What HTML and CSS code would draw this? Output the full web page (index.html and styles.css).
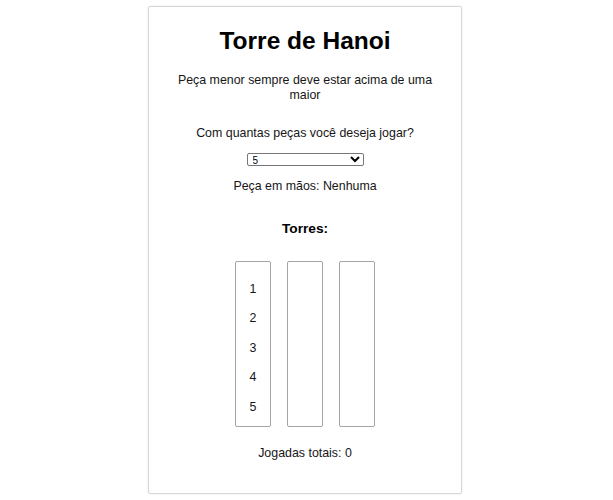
FILE: index.html
```html
<!DOCTYPE html>
<html lang="pt-BR">
<head>
<meta charset="utf-8">
<title>Torre de Hanoi</title>
<link rel="stylesheet" href="styles.css">
</head>
<body>
<main class="card">
  <h1 class="title">Torre de Hanoi</h1>
  <p class="subtitle">Peça menor sempre deve estar acima de uma maior</p>
  <p class="question">Com quantas peças você deseja jogar?</p>
  <select class="count">
    <option>3</option>
    <option>4</option>
    <option selected>5</option>
    <option>6</option>
    <option>7</option>
  </select>
  <p class="hand">Peça em mãos: Nenhuma</p>
  <h3 class="towers-title">Torres:</h3>
  <div class="towers">
    <div class="tower">
      <div class="piece">1</div>
      <div class="piece">2</div>
      <div class="piece">3</div>
      <div class="piece">4</div>
      <div class="piece">5</div>
    </div>
    <div class="tower"></div>
    <div class="tower"></div>
  </div>
  <p class="moves">Jogadas totais: 0</p>
</main>
</body>
</html>
```

FILE: styles.css
```css
html, body {
  margin: 0;
  padding: 0;
  background: #fff;
}

body {
  box-sizing: border-box;
  min-height: 100vh;
  padding-right: 3px;
  display: flex;
  align-items: center;
  justify-content: center;
  font-family: "Liberation Sans", Arial, sans-serif;
  font-size: 12.4px;
  color: #161616;
}

.card {
  box-sizing: border-box;
  width: 314px;
  height: 488px;
  padding: 20px 16px 0;
  border: 1px solid #d8d8d8;
  border-radius: 2px;
  box-shadow: 0 0 2px rgba(0, 0, 0, 0.12);
  text-align: center;
}

.title {
  margin: 0;
  font-size: 24.5px;
  line-height: 28px;
  font-weight: bold;
  color: #000;
}

.subtitle {
  margin: 18px 0 0;
  line-height: 14.5px;
}

.question {
  margin: 23.5px 0 0;
  line-height: 14.5px;
}

.count {
  display: block;
  margin: 13px auto 0;
  box-sizing: border-box;
  width: 117px;
  height: 13px;
  padding: 0 0 0 1px;
  font-family: "Liberation Sans", Arial, sans-serif;
  font-size: 10px;
  line-height: 11px;
  color: #000;
  background: #fff;
  border: 1px solid #767676;
  border-radius: 2px;
}

.hand {
  margin: 12.5px 0 0;
  line-height: 14.5px;
}

.towers-title {
  margin: 28.25px 0 0;
  font-size: 13.7px;
  line-height: 16px;
  font-weight: bold;
  color: #000;
}

.towers {
  display: flex;
  justify-content: center;
  gap: 16px;
  margin-top: 23.75px;
}

.tower {
  box-sizing: border-box;
  width: 36px;
  height: 166px;
  padding-bottom: 4px;
  border: 1px solid #a4a4a4;
  border-radius: 2px;
  display: flex;
  flex-direction: column;
  justify-content: flex-end;
}

.piece {
  height: 29.5px;
  line-height: 29.5px;
}

.moves {
  margin: 18.5px 0 0;
  line-height: 14.5px;
}
```
